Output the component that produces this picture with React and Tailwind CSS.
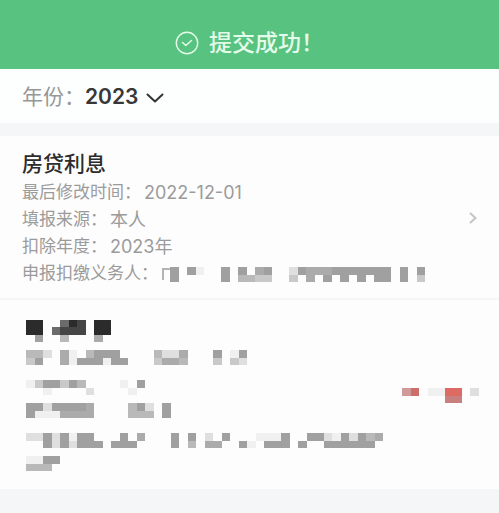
import { useState } from "react";

const SHADES = {
  a: "#2b2b2b",
  b: "#454545",
  c: "#6b6b6b",
  d: "#8a8a8a",
  e: "#a0a0a0",
  f: "#ababab",
  g: "#b9b9ba",
  h: "#c9c9ca",
  i: "#dfdfdf",
  j: "#f0f0f0",
  p: "#cf9a9a",
  q: "#cc6f6b",
  r: "#de6a64",
  s: "#c97f7d",
};

// Masked text, one letter per block
function Mosaic({ rows, label, className }) {
  const cols = rows[0].length;

  return (
    <svg
      role="img"
      aria-label={label}
      viewBox={`0 0 ${cols * 17} ${rows.length * 15}`}
      preserveAspectRatio="none"
      shapeRendering="crispEdges"
      className={`block shrink-0 ${className}`}
    >
      {rows.map((row, y) =>
        row.split("").map((cell, x) =>
          SHADES[cell] ? (
            <rect key={`${x}-${y}`} x={x * 17} y={y * 15} width="17" height="15" fill={SHADES[cell]} />
          ) : null
        )
      )}
    </svg>
  );
}

function SuccessBanner() {
  return (
    <header className="flex h-[69px] items-end justify-center gap-2.5 bg-[#58c280] pb-2.5 text-[#e4fbe9]">
      <svg viewBox="0 0 24 24" className="mb-1 size-6" fill="none" stroke="currentColor" strokeLinecap="round" strokeLinejoin="round">
        <circle cx="12" cy="12" r="10.7" strokeWidth="1.4" />
        <path d="M7.5 11.5l3.3 3 5.7-5" strokeWidth="1.5" />
      </svg>
      <h1 className="text-[23px] leading-8 font-medium">提交成功！</h1>
    </header>
  );
}

function YearPicker() {
  const [year, setYear] = useState("2023");

  return (
    <div className="flex h-[54px] items-center bg-[#fdfefe] px-[22px] pt-0.5 text-[21px]">
      <label htmlFor="year" className="text-[#979797]">
        年份：
      </label>
      <div className="relative">
        <select
          id="year"
          value={year}
          onChange={(e) => setYear(e.target.value)}
          className="w-[79px] appearance-none bg-transparent font-semibold text-[#383838]"
        >
          <option>2023</option>
          <option>2022</option>
        </select>
        <svg
          viewBox="0 0 18 10"
          className="pointer-events-none absolute top-3 right-0 h-[10px] w-[18px]"
          fill="none"
          stroke="#333"
          strokeWidth="2"
          strokeLinecap="round"
          strokeLinejoin="round"
        >
          <path d="M1.5 1.5L9 8.5l7.5-7" />
        </svg>
      </div>
    </div>
  );
}

function Field({ label, value }) {
  return (
    <p className="flex gap-[3px]">
      <span>{label}：</span>
      <span className="text-[18px]">{value}</span>
    </p>
  );
}

export default function App() {
  return (
    <div
      lang="zh-CN"
      className="min-h-screen bg-[#f4f6f8] font-[Inter,'Noto_Sans_CJK_SC',sans-serif]"
    >
      <SuccessBanner />
      <YearPicker />

      <main className="mt-[13px] bg-[#fdfdfd]">
        <a href="#detail" className="flex items-center border-b-2 border-[#f5f5f5] px-[22px] pt-[13px] pb-[11px]">
          <div className="min-w-0 flex-1 text-[17px] leading-[27px] whitespace-nowrap text-[#9b9b9b]">
            <h2 className="text-[21px] leading-[30px] font-medium text-[#2c2c2c]">房贷利息</h2>
            <Field label="最后修改时间" value="2022-12-01" />
            <Field label="填报来源" value="本人" />
            <Field label="扣除年度" value="2023年" />
            <div className="flex items-center">
              <p>申报扣缴义务人：</p>
              <span className="ml-1 h-3 w-2 border-t-2 border-l-2 border-[#b4b4b4]" />
              <Mosaic
                label="已遮盖"
                className="mt-0.5 h-[15px] w-[255px]"
                rows={["e.ej..e.e.fe..iefffeeeeeee.e.e", "e.....e.gghh..h.f.e.e.e.ee.e.h"]}
              />
            </div>
          </div>
          <svg viewBox="0 0 8 12" className="h-3 w-2" fill="none" stroke="#c4c4c4" strokeWidth="2">
            <path d="M1 1l5.5 5L1 11" />
          </svg>
        </a>

        <section className="flex items-center justify-between pt-5 pr-3 pb-[18px] pl-[26px]">
          <div>
            <Mosaic
              label="已遮盖"
              className="h-[22px] w-[85px]"
              rows={["aa..cab.aa", "aa.cbbb.aa", ".e..g...f."]}
            />
            <Mosaic
              label="已遮盖"
              className="mt-2 h-[15px] w-[221px]"
              rows={["ggi.fj.geee....giif...e.je", "he..fjeeejee...hffg...h.hi"]}
            />
            <Mosaic
              label="已遮盖"
              className="mt-[15px] h-[15px] w-[119px]"
              rows={["jheeheg....j.e", "..j....i....j."]}
            />
            <Mosaic
              label="已遮盖"
              className="mt-2 h-[15px] w-[153px]"
              rows={["eeieeeef....gei.e.", "ejjjffff....ggg.e."]}
            />
            <Mosaic
              label="已遮盖"
              className="mt-[15px] h-[15px] w-[357px]"
              rows={[
                "iieiejee...e.f...e.e.i.e...jjje..eeijeiegf",
                "..eieieee.eee....e.g.ff..ej.eee.e..eeeeee.",
              ]}
            />
            <Mosaic label="已遮盖" className="mt-2 h-[15px] w-[34px]" rows={["jjee", "ggg."]} />
          </div>
          <Mosaic
            label="已遮盖"
            className="h-[15px] w-[85px]"
            rows={["pq.jjrr.i.", ".....ss..."]}
          />
        </section>
      </main>
    </div>
  );
}
